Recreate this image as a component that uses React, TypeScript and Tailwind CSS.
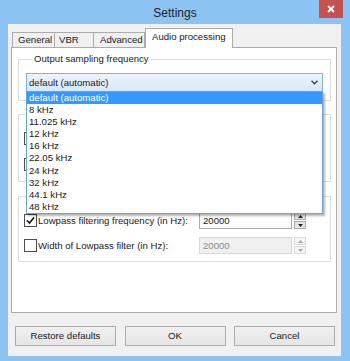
import { useState } from "react";

const rates = [
  "default (automatic)",
  "8 kHz",
  "11.025 kHz",
  "12 kHz",
  "16 kHz",
  "22.05 kHz",
  "24 kHz",
  "32 kHz",
  "44.1 kHz",
  "48 kHz",
];

const Check = ({ checked }: { checked?: boolean }) => (
  <span className="w-[13px] h-[13px] shrink-0 border border-[#4d4d4d] bg-white flex items-center justify-center">
    {checked && (
      <svg width="9" height="9" viewBox="0 0 9 9">
        <path d="M1 4.5 L3.5 7 L8 1.5" fill="none" stroke="#111" strokeWidth="1.6" />
      </svg>
    )}
  </span>
);

const Spin = ({ disabled }: { disabled?: boolean }) => {
  const c = disabled ? "#a8a8a8" : "#222";
  const box = disabled
    ? "border-[#dcdcdc] bg-[#f4f4f4]"
    : "border-[#acacac] bg-[#e5e5e5]";
  return (
    <div className="ml-[2px] w-[12px] h-[17px] flex flex-col gap-[1px]">
      <div className={`flex-1 border ${box} flex items-center justify-center`}>
        <svg width="5" height="3" viewBox="0 0 5 3"><path d="M0 3 L2.5 0 L5 3Z" fill={c} /></svg>
      </div>
      <div className={`flex-1 border ${box} flex items-center justify-center`}>
        <svg width="5" height="3" viewBox="0 0 5 3"><path d="M0 0 L2.5 3 L5 0Z" fill={c} /></svg>
      </div>
    </div>
  );
};

const App = () => {
  const [rate, setRate] = useState(0);

  return (
    <div className="w-[350px] h-[361px] bg-[#8cc3f2] flex flex-col font-['Liberation_Sans',Arial,sans-serif] text-[9.6px] text-[#1a1a1a] leading-none whitespace-nowrap">
      {/* title bar */}
      <div className="h-[24px] relative flex items-center justify-center">
        <span className="text-[12px] text-[#1e1e1e] mt-[2px]">Settings</span>
        <div className="absolute right-[7px] top-0 w-[24px] h-[18px] bg-[#c75050] flex items-center justify-center">
          <svg width="8" height="8" viewBox="0 0 8 8">
            <path d="M1 1 L7 7 M7 1 L1 7" stroke="#fff" strokeWidth="1.8" />
          </svg>
        </div>
      </div>

      {/* client area */}
      <div className="ml-[8px] mr-[9px] mb-[5px] flex-1 bg-[#f0f0f0] flex flex-col pl-[3px] pr-[4px] pt-[4px]">
        <div className="h-[19px] flex items-end pl-[1px]">
          <div className="w-[42px] h-[15px] border-l border-t border-[#acacac] bg-[#f0f0f0] pl-[5px] flex items-center">General</div>
          <div className="w-[39px] h-[15px] border-l border-t border-[#acacac] bg-[#f0f0f0] pl-[4px] flex items-center">VBR</div>
          <div className="w-[52px] h-[15px] border-x border-t border-[#acacac] bg-[#f0f0f0] pl-[6px] flex items-center">Advanced</div>
          <div className="relative z-10 -mb-px w-[88px] h-[20px] border-x border-t border-[#acacac] bg-white pl-[6px] pb-[3px] flex items-center">Audio processing</div>
        </div>

        <div className="h-[266px] border border-[#acacac] bg-white pl-[6px] pr-[5px] pt-[3px]">
          <fieldset className="border border-[#dcdcdc] px-[7px] pt-[6px] pb-[8px]">
            <legend className="ml-[6px] px-[2px] leading-[16px]">Output sampling frequency</legend>
            <div className="relative z-20">
              <div className="h-[19px] border border-[#7eb4ea] bg-gradient-to-b from-[#ecf4fc] to-[#d4e8fb] flex items-center pl-[2px] pr-[4px]">
                <span className="flex-1">{rates[rate]}</span>
                <svg width="7" height="5" viewBox="0 0 7 5">
                  <path d="M0.5 0.8 L3.5 3.8 L6.5 0.8" fill="none" stroke="#444" strokeWidth="1.4" />
                </svg>
              </div>
              <div className="absolute left-0 right-0 top-[18px] border border-[#6aa2dc] bg-white shadow-[2px_2px_2px_rgba(0,0,0,0.3)]">
                {rates.map((r, i) => (
                  <div
                    key={r}
                    onClick={() => setRate(i)}
                    className={`h-[12.1px] leading-[12px] pl-[2px] ${i === rate ? "bg-[#3399ff] text-white" : ""}`}
                  >
                    {r}
                  </div>
                ))}
              </div>
            </div>
          </fieldset>

          <fieldset className="mt-[5px] border border-[#dcdcdc] px-[5px] pt-[10px] pb-[10px]">
            <legend className="ml-[6px] w-[70px] h-[16px]" />
            <div className="flex flex-col gap-[13px]">
              <div className="h-[13px] flex items-center"><Check /></div>
              <div className="h-[13px] flex items-center"><Check /></div>
            </div>
          </fieldset>

          <fieldset className="mt-[6px] border border-[#dcdcdc] px-[5px] pt-[8px] pb-[7px]">
            <legend className="ml-[6px] w-[50px] h-[16px]" />
            <div className="flex flex-col gap-[8px]">
              <div className="h-[17px] flex items-center">
                <div className="w-[175px] flex items-center gap-[1px]">
                  <Check checked />
                  <span>Lowpass filtering frequency (in Hz):</span>
                </div>
                <div className="w-[93px] h-[17px] border border-[#abadb3] bg-white flex items-center pl-[3px]">20000</div>
                <Spin />
              </div>
              <div className="h-[17px] flex items-center">
                <div className="w-[175px] flex items-center gap-[1px]">
                  <Check />
                  <span>Width of Lowpass filter (in Hz):</span>
                </div>
                <div className="w-[93px] h-[17px] border border-[#d9d9d9] bg-[#f0f0f0] text-[#8a8a8a] flex items-center pl-[3px]">20000</div>
                <Spin disabled />
              </div>
            </div>
          </fieldset>
        </div>

        <div className="mt-[13px] ml-[4px] w-[320px] flex justify-between">
          {["Restore defaults", "OK", "Cancel"].map((b) => (
            <button
              key={b}
              className="w-[101px] h-[20px] border border-[#acacac] bg-gradient-to-b from-[#f0f0f0] to-[#e5e5e5] text-[9.6px] text-[#1a1a1a]"
            >
              {b}
            </button>
          ))}
        </div>
      </div>
    </div>
  );
};

export default App;
